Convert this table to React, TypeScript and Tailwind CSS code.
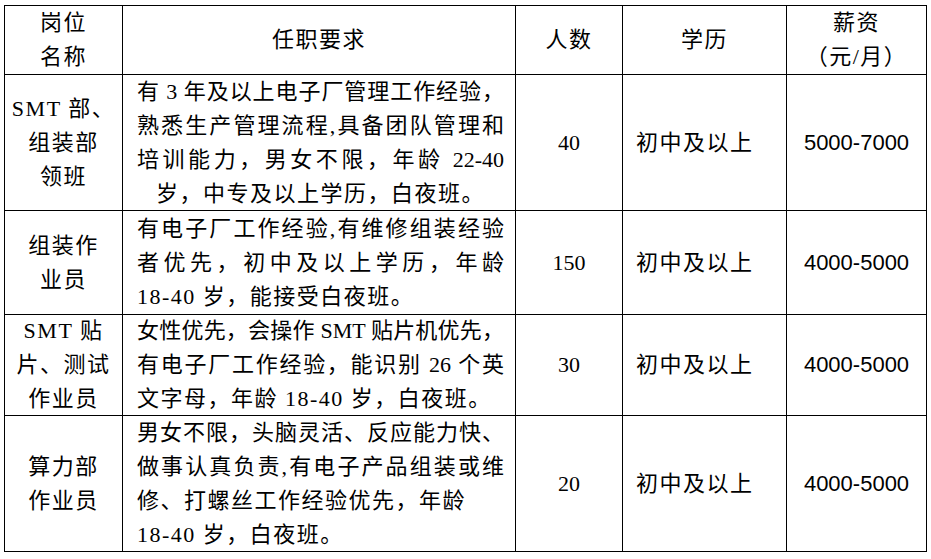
import React from "react";

type Align = "j" | "c" | "l";
type Row = {
  name: string[];
  req: [string, Align][];
  num: string;
  edu: string;
  pay: string;
};

const rows: Row[] = [
  {
    name: ["SMT 部、", "组装部", "领班"],
    req: [
      ["有 3 年及以上电子厂管理工作经验，", "j"],
      ["熟悉生产管理流程,具备团队管理和", "j"],
      ["培训能力，男女不限，年龄 22-40", "j"],
      ["岁，中专及以上学历，白夜班。", "c"],
    ],
    num: "40",
    edu: "初中及以上",
    pay: "5000-7000",
  },
  {
    name: ["组装作", "业员"],
    req: [
      ["有电子厂工作经验,有维修组装经验", "j"],
      ["者优先，初中及以上学历，年龄", "j"],
      ["18-40 岁，能接受白夜班。", "l"],
    ],
    num: "150",
    edu: "初中及以上",
    pay: "4000-5000",
  },
  {
    name: ["SMT 贴", "片、测试", "作业员"],
    req: [
      ["女性优先，会操作 SMT 贴片机优先，", "j"],
      ["有电子厂工作经验，能识别 26 个英", "j"],
      ["文字母，年龄 18-40 岁，白夜班。", "l"],
    ],
    num: "30",
    edu: "初中及以上",
    pay: "4000-5000",
  },
  {
    name: ["算力部", "作业员"],
    req: [
      ["男女不限，头脑灵活、反应能力快、", "j"],
      ["做事认真负责,有电子产品组装或维", "j"],
      ["修、打螺丝工作经验优先，年龄", "l"],
      ["18-40 岁，白夜班。", "l"],
    ],
    num: "20",
    edu: "初中及以上",
    pay: "4000-5000",
  },
];

const alignClass: Record<Align, string> = {
  j: "text-justify [text-align-last:justify]",
  c: "text-center tracking-[1.5px]",
  l: "text-left tracking-[1.5px]",
};

function Center({ children }: { children: React.ReactNode }) {
  return (
    <div className="flex flex-col items-center justify-center bg-white text-center tracking-[1.5px]">
      {children}
    </div>
  );
}

export default function App() {
  return (
    <div className="min-h-[559px] w-[931px] bg-white pl-[4px] pt-[5px] font-['Liberation_Serif','Noto_Sans_CJK_SC',serif] text-[22px] leading-[34px] text-black">
      <div className="grid w-max grid-cols-[117px_392px_106px_163px_139px] grid-rows-[68px_135px_103px_100px_135px] gap-px bg-black p-px">
        {/* Header */}
        <Center>
          <div>岗位</div>
          <div>名称</div>
        </Center>
        <Center>
          <div>任职要求</div>
        </Center>
        <Center>
          <div>人数</div>
        </Center>
        <Center>
          <div>学历</div>
        </Center>
        <Center>
          <div>薪资</div>
          <div>（元/月）</div>
        </Center>

        {rows.map((r, i) => (
          <React.Fragment key={i}>
            <Center>
              {r.name.map((n, k) => (
                <div key={k} className="whitespace-nowrap">
                  {n}
                </div>
              ))}
            </Center>
            <div className="flex flex-col justify-center bg-white pl-[14px] pr-[11px]">
              {r.req.map(([t, a], k) => (
                <div key={k} className={alignClass[a]}>
                  {t}
                </div>
              ))}
            </div>
            <div className="flex items-center justify-center bg-white">
              {r.num}
            </div>
            <div className="flex items-center justify-start bg-white pl-[13px] tracking-[1.5px]">
              {r.edu}
            </div>
            <div className="flex items-center justify-center bg-white font-['Liberation_Sans',sans-serif]">
              {r.pay}
            </div>
          </React.Fragment>
        ))}
      </div>
    </div>
  );
}
